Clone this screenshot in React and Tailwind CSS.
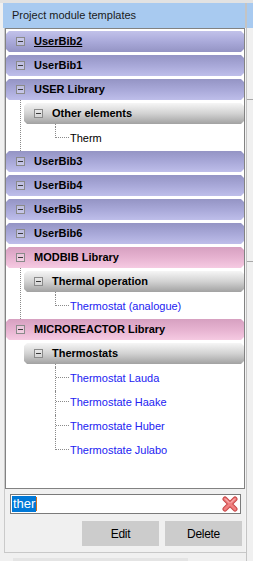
import React from "react";

const notch =
  "[clip-path:polygon(3px_0,calc(100%_-_3px)_0,100%_3px,100%_calc(100%_-_3px),calc(100%_-_3px)_100%,3px_100%,0_calc(100%_-_3px),0_3px)]";

const tones = {
  purple: "bg-[linear-gradient(to_bottom,#9494c4,#a8a8d8_50%,#bebeea)]",
  hover: "bg-[linear-gradient(to_bottom,#c2c2ea,#aaaada_50%,#9494c4)]",
  pink: "bg-[linear-gradient(to_bottom,#d6a0c0,#e6b2d0_50%,#f6cae2)]",
  gray: "bg-[linear-gradient(to_bottom,#f6f6f6,#d2d2d2_50%,#a2a2a2)]",
};

const groups = [
  { label: "UserBib2", tone: "hover", underline: true },
  { label: "UserBib1" },
  {
    label: "USER Library",
    line: true,
    subs: [{ label: "Other elements", leaves: [{ text: "Therm", black: true }] }],
  },
  { label: "UserBib3" },
  { label: "UserBib4" },
  { label: "UserBib5" },
  { label: "UserBib6" },
  {
    label: "MODBIB Library",
    tone: "pink",
    line: true,
    subs: [{ label: "Thermal operation", leaves: [{ text: "Thermostat (analogue)" }] }],
  },
  {
    label: "MICROREACTOR Library",
    tone: "pink",
    subs: [
      {
        label: "Thermostats",
        leaves: [
          { text: "Thermostat Lauda" },
          { text: "Thermostate Haake" },
          { text: "Thermostate Huber" },
          { text: "Thermostate Julabo" },
        ],
      },
    ],
  },
];

function Minus() {
  return (
    <span className="flex h-[9px] w-[9px] shrink-0 items-center justify-center border border-[#8a8a8a] bg-white/30">
      <span className="h-px w-[5px] bg-[#3a3a3a]" />
    </span>
  );
}

function Header({ label, tone = "purple", underline, className = "" }) {
  return (
    <div className={`flex h-[21px] items-center ${tones[tone]} ${notch} ${className}`}>
      <span className="ml-[10px]">
        <Minus />
      </span>
      <span
        className={`ml-[9px] text-[11px] font-bold text-black ${underline ? "underline" : ""}`}
      >
        {label}
      </span>
    </div>
  );
}

function Leaf({ text, black, last }) {
  return (
    <div className="flex h-[24px]">
      {last ? (
        <div className="h-[11px] w-[14px] border-b border-l border-dotted border-[#8a8a8a]" />
      ) : (
        <div className="h-full w-[14px] border-l border-dotted border-[#8a8a8a]">
          <div className="h-[11px] border-b border-dotted border-[#8a8a8a]" />
        </div>
      )}
      <span
        className={`ml-[1px] pt-[4px] text-[11px] leading-[14px] ${
          black ? "text-black" : "text-[#2222f2]"
        }`}
      >
        {text}
      </span>
    </div>
  );
}

function Group({ group }) {
  if (!group.subs) {
    return <Header {...group} className="mb-[3px]" />;
  }
  return (
    <div>
      <Header {...group} />
      <div
        className={`ml-[14px] border-l border-dotted pl-[3px] pt-[3px] ${
          group.line ? "border-[#8a8a8a]" : "border-transparent"
        }`}
      >
        {group.subs.map((sub) => (
          <div key={sub.label}>
            <Header label={sub.label} tone="gray" />
            <div className="ml-[31px]">
              <div className="h-[3px] border-l border-dotted border-[#8a8a8a]" />
              {sub.leaves.map((leaf, i) => (
                <Leaf key={leaf.text} {...leaf} last={i === sub.leaves.length - 1} />
              ))}
            </div>
          </div>
        ))}
      </div>
    </div>
  );
}

function ClearIcon() {
  return (
    <svg width="16" height="16" viewBox="0 0 16 16">
      <path d="M3 3 L13 13 M13 3 L3 13" stroke="#c84848" strokeWidth="5" strokeLinecap="round" />
      <path d="M3 3 L13 13 M13 3 L3 13" stroke="#f08080" strokeWidth="3" strokeLinecap="round" />
      <path d="M3.5 3 L7 6.5 M12.5 3 L9 6.5" stroke="#fbc4c4" strokeWidth="1" strokeLinecap="round" />
    </svg>
  );
}

export default function App() {
  return (
    <div className="flex h-[561px] w-[253px] flex-col overflow-hidden bg-[#f0f0f0] font-['Liberation_Sans',Arial,sans-serif]">
      <div className="h-[3px] bg-[#e2e2e2]" />

      {/* Panel caption */}
      <div className="flex h-[25px]">
        <div className="w-[3px]" />
        <div className="flex w-[242px] items-center bg-[#a8caf0] pl-[9px] text-[11px] text-[#1a1a1a]">
          Project module templates
        </div>
        <div className="w-[2px] bg-[#c4c4c4]" />
        <div className="flex-1 bg-[#a8caf0]" />
      </div>

      <div className="flex h-[524px]">
        <div className="w-[4px]" />
        <div className="flex w-[241px] flex-col border-l border-[#cacaca]">
          {/* Tree */}
          <div className="h-[461px] w-[240px] overflow-hidden border border-[#828282] bg-white pt-[2px]">
            {groups.map((g) => (
              <Group key={g.label} group={g} />
            ))}
          </div>

          {/* Search */}
          <div className="ml-[5px] mt-[5px] flex h-[20px] w-[231px] items-center border border-[#7a7a7a] bg-white">
            <span className="ml-[1px] flex h-[16px] items-center bg-[#0078d7] px-[1px] text-[13px] leading-[16px] text-white">
              ther
            </span>
            <span className="h-[14px] w-px bg-[#d07020]" />
            <span className="ml-auto mr-[2px] flex">
              <ClearIcon />
            </span>
          </div>

          {/* Buttons */}
          <div className="mr-[3px] mt-[7px] flex justify-end gap-[6px]">
            <button className="h-[25px] w-[77px] bg-[#cccccc] text-[12px] tracking-[-0.3px] text-black">
              Edit
            </button>
            <button className="h-[25px] w-[77px] bg-[#cccccc] text-[12px] tracking-[-0.3px] text-black">
              Delete
            </button>
          </div>
        </div>
        <div className="w-[1px] bg-[#f4f4f4]" />
        <div className="w-[1px] bg-[#c4c4c4]" />
        <div className="flex flex-1 flex-col">
          <div className="mt-[71px] h-px bg-[#a8a8a8]" />
          <div className="mt-[161px] h-px bg-[#a8a8a8]" />
        </div>
      </div>

      {/* Bottom */}
      <div className="flex flex-1">
        <div className="w-[4px]" />
        <div className="flex w-[242px] flex-col">
          <div className="h-px bg-[#c8c8c8]" />
          <div className="ml-[9px] mt-[5px] h-[3px] w-[175px] bg-[#e4e4e4]" />
        </div>
        <div className="w-[1px] bg-[#c4c4c4]" />
      </div>
    </div>
  );
}
